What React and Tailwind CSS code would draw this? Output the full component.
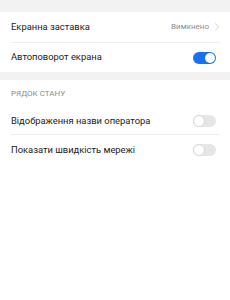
function ToggleOn() {
  return (
    <div className="w-[23px] h-[12px] rounded-full bg-[#1872f0] flex items-center justify-end pr-[1px] mr-[4px]">
      <div className="w-[10px] h-[10px] rounded-full bg-white" />
    </div>
  );
}

function ToggleOff() {
  return (
    <div className="w-[23px] h-[12px] rounded-full bg-[#e6e6e6] flex items-center mr-[4px]">
      <div className="w-[12px] h-[12px] rounded-full bg-white border border-[#d6d6d6]" />
    </div>
  );
}

export default function App() {
  return (
    <div className="w-[230px] h-[300px] bg-white flex flex-col font-[Roboto,sans-serif]">
      <div className="h-[12px] bg-[#f2f2f2]" />
      <div className="pl-[11px] pr-[10px]">
        <div className="h-[31px] flex items-center justify-between border-b border-[#ededed]">
          <span className="text-[9.4px] text-[#1a1a1a]">Екранна заставка</span>
          <div className="flex items-center gap-[6px] pr-[1px]">
            <span className="text-[8px] text-[#8c8c8c]">Вимкнено</span>
            <svg width="4" height="8" viewBox="0 0 4 8">
              <path d="M0.4 0.4 L3.5 4 L0.4 7.6" fill="none" stroke="#c8c8c8" strokeWidth="0.8" />
            </svg>
          </div>
        </div>
        <div className="h-[29px] flex items-center justify-between">
          <span className="text-[9.4px] text-[#1a1a1a]">Автоповорот екрана</span>
          <ToggleOn />
        </div>
      </div>
      <div className="h-[8px] bg-[#f2f2f2]" />
      <div className="pl-[11px] pr-[10px]">
        <div className="h-[28px] flex items-center">
          <span className="text-[8px] text-[#8c8c8c]">РЯДОК СТАНУ</span>
        </div>
        <div className="h-[27px] flex items-center justify-between border-b border-[#ededed]">
          <span className="text-[9.4px] text-[#1a1a1a]">Відображення назви оператора</span>
          <ToggleOff />
        </div>
        <div className="h-[30px] flex items-center justify-between">
          <span className="text-[9.4px] text-[#1a1a1a]">Показати швидкість мережі</span>
          <ToggleOff />
        </div>
      </div>
    </div>
  );
}
